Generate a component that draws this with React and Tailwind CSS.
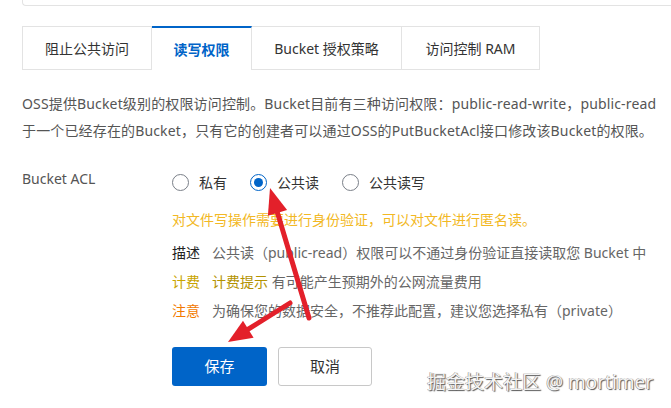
import React from 'react';

const tabs = [
  { label: '阻止公共访问', w: 'w-[130px]' },
  { label: '读写权限', w: 'w-[100px]', active: true },
  { label: 'Bucket 授权策略', w: 'w-[150px]' },
  { label: '访问控制 RAM', w: 'w-[138px]' },
];

const options = [
  { label: '私有' },
  { label: '公共读', checked: true },
  { label: '公共读写' },
];

function Radio({ checked }) {
  return (
    <span
      className={`flex h-[17px] w-[17px] items-center justify-center rounded-full border ${
        checked ? 'border-[#0064c8]' : 'border-[#7a7f88]'
      }`}
    >
      {checked && <span className="h-[9px] w-[9px] rounded-full bg-[#0064c8]" />}
    </span>
  );
}

// Red annotation arrows drawn over the form
function Arrows() {
  return (
    <svg className="pointer-events-none absolute left-0 top-0" width="671" height="408">
      <line x1="309" y1="318" x2="277.5" y2="212.9" stroke="#e3202a" strokeWidth="5" strokeLinecap="round" />
      <polygon points="270,188 287.1,210 267.9,215.8" fill="#e3202a" />
      <line x1="290" y1="303" x2="248.3" y2="329.2" stroke="#e3202a" strokeWidth="5" strokeLinecap="round" />
      <polygon points="228,342 253.6,337.7 243,320.7" fill="#e3202a" />
    </svg>
  );
}

export default function App() {
  return (
    <div className="relative h-[408px] w-[671px] overflow-hidden bg-white font-['Noto_Sans','Noto_Sans_CJK_SC',sans-serif] text-[14px] text-[#333]">
      <div className="ml-[22px] h-[6px] rounded-bl-[4px] border-b border-l border-[#e3e3e3]" />

      <div className="mt-[20px] flex pl-[22px]">
        {tabs.map((t) => (
          <div
            key={t.label}
            className={`flex h-[44px] items-center justify-center border-r border-[#e3e3e3] ${t.w} ${
              t.active
                ? 'border-t-2 border-t-[#0064c8] font-semibold text-[#0064c8]'
                : 'border-y first:border-l'
            }`}
          >
            {t.label}
          </div>
        ))}
      </div>

      <div className="mt-[20px] whitespace-nowrap pl-[22px] leading-[27px] tracking-[0.15px] text-[#555]">
        <div>OSS提供Bucket级别的权限访问控制。Bucket目前有三种访问权限：public-read-write，public-read</div>
        <div>于一个已经存在的Bucket，只有它的创建者可以通过OSS的PutBucketAcl接口修改该Bucket的权限。</div>
      </div>

      <div className="mt-[26px] flex">
        <div className="w-[172px] shrink-0 pl-[22px] pt-[1px] leading-[16px] text-[#555]">Bucket ACL</div>
        <div className="min-w-0 flex-1 whitespace-nowrap">
          <div className="flex h-[24px] items-center gap-[23px]">
            {options.map((o) => (
              <div key={o.label} className="flex items-center gap-[10px]">
                <Radio checked={o.checked} />
                <span>{o.label}</span>
              </div>
            ))}
          </div>

          <div className="mt-[16px] leading-[20px] text-[#f2b824]">
            对文件写操作需要进行身份验证，可以对文件进行匿名读。
          </div>

          <div className="mt-[8px]">
            <div className="flex h-[29px] items-center gap-[12px]">
              <span className="text-[#222]">描述</span>
              <span className="text-[#666]">公共读（public-read）权限可以不通过身份验证直接读取您 Bucket 中</span>
            </div>
            <div className="flex h-[29px] items-center gap-[12px]">
              <span className="text-[#c9a400]">计费</span>
              <span className="text-[#666]">
                <span className="text-[#b39200]">计费提示</span> 有可能产生预期外的公网流量费用
              </span>
            </div>
            <div className="flex h-[29px] items-center gap-[12px]">
              <span className="text-[#f27a00]">注意</span>
              <span className="text-[#666]">为确保您的数据安全，不推荐此配置，建议您选择私有（private）</span>
            </div>
          </div>

          <div className="mt-[22px] flex gap-[11px]">
            <button className="h-[39px] w-[95px] rounded-[3px] bg-[#0064c8] text-[15px] text-white">保存</button>
            <button className="h-[39px] w-[94px] rounded-[3px] border border-[#c8c8c8] bg-white text-[15px] text-[#333]">取消</button>
          </div>
        </div>
      </div>

      <Arrows />

      <div className="absolute left-[427px] top-[369px] whitespace-nowrap text-[19px] leading-[26px] text-[#f4f4f4] [text-shadow:1px_1px_1px_#555,-0.5px_-0.5px_0_#888]">
        掘金技术社区 @ mortimer
      </div>
    </div>
  );
}
